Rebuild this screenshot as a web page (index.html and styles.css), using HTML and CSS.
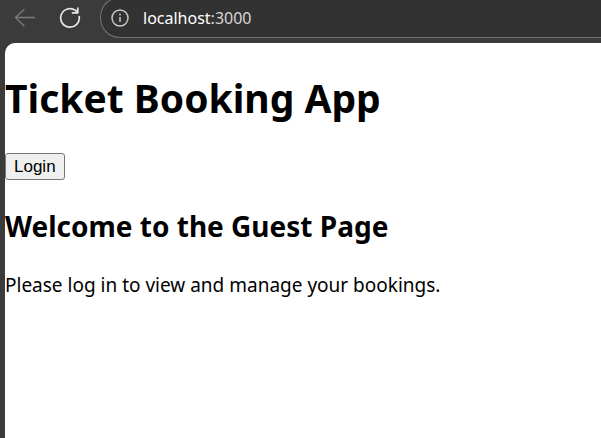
FILE: index.html
```html
<!DOCTYPE html>
<html lang="en">
<head>
<meta charset="utf-8">
<meta name="viewport" content="width=device-width, initial-scale=1">
<title>Ticket Booking App</title>
<link rel="stylesheet" href="styles.css">
</head>
<body>
<header class="toolbar">
  <button class="nav-button nav-back" type="button" aria-label="Back" disabled>
    <svg width="22" height="20" viewBox="0 0 22 20" fill="none" stroke="currentColor" stroke-width="1.3" stroke-linecap="round" stroke-linejoin="round"><path d="M20.500 9.500H1.500M10 1.500 1.500 9.500l8.500 8.500"/></svg>
  </button>
  <button class="nav-button nav-reload" type="button" aria-label="Reload">
    <svg width="22" height="22" viewBox="0 0 22 22" fill="none" stroke="currentColor" stroke-width="1.700" stroke-linecap="round" stroke-linejoin="round"><path d="M20.200 9.500A9.300 9.300 0 1 1 16.500 3.400L18.800 5.500M18.800 1.200V5.900H13.500"/></svg>
  </button>
  <div class="address">
    <svg class="info" width="18" height="18" viewBox="0 0 18 18" fill="none" stroke="currentColor" stroke-width="1.5"><circle cx="9" cy="9" r="8"/><path d="M9 8v5"/><circle cx="9" cy="5.500" r="1" fill="currentColor" stroke="none"/></svg>
    <span class="url"><span class="host">localhost</span>:3000</span>
  </div>
</header>
<main class="page">
  <h1>Ticket Booking App</h1>
  <button class="login" type="button">Login</button>
  <h2>Welcome to the Guest Page</h2>
  <p>Please log in to view and manage your bookings.</p>
</main>
</body>
</html>
```
FILE: styles.css
```css
* {
  box-sizing: border-box;
}

body {
  display: flex;
  flex-direction: column;
  min-height: 100vh;
  margin: 0;
  overflow: hidden;
  background: #3b3b3b;
  color: #000;
  font-family: "Segoe UI", "Noto Sans", sans-serif;
}

.toolbar {
  display: flex;
  align-items: center;
  padding-left: 14px;
  margin-top: -3px;
}

.nav-button {
  display: flex;
  padding: 0;
  border: 0;
  background: none;
  color: #e6e6e6;
}

.nav-back {
  margin-right: 23px;
  color: #7b7b7b;
}

.nav-reload {
  margin-right: 19px;
}

.address {
  display: flex;
  flex: 1;
  align-items: center;
  gap: 14px;
  height: 41px;
  padding-left: 10px;
  border: 1px solid #747474;
  border-right: 0;
  border-radius: 20px 0 0 20px;
  background: #323232;
}

.info {
  color: #c8c8c8;
}

.url {
  color: #d6d6d6;
  font-size: 16px;
  line-height: 24px;
}

.host {
  color: #fff;
}

.page {
  flex: 1;
  margin: 5px 0 0 5px;
  border-radius: 10px 0 0 0;
  background: #fff;
}

h1 {
  margin: 28px 0;
  font-size: 39px;
  line-height: 54px;
}

.login {
  display: block;
  height: 27px;
  padding: 0 8px;
  border: 1px solid #767676;
  border-radius: 3px;
  background: #efefef;
  color: #000;
  font-family: "Liberation Sans", sans-serif;
  font-size: 17px;
}

h2 {
  margin: 26px 0;
  font-size: 28px;
  line-height: 40px;
}

p {
  margin: 0;
  font-size: 19px;
  line-height: 26px;
}
```
